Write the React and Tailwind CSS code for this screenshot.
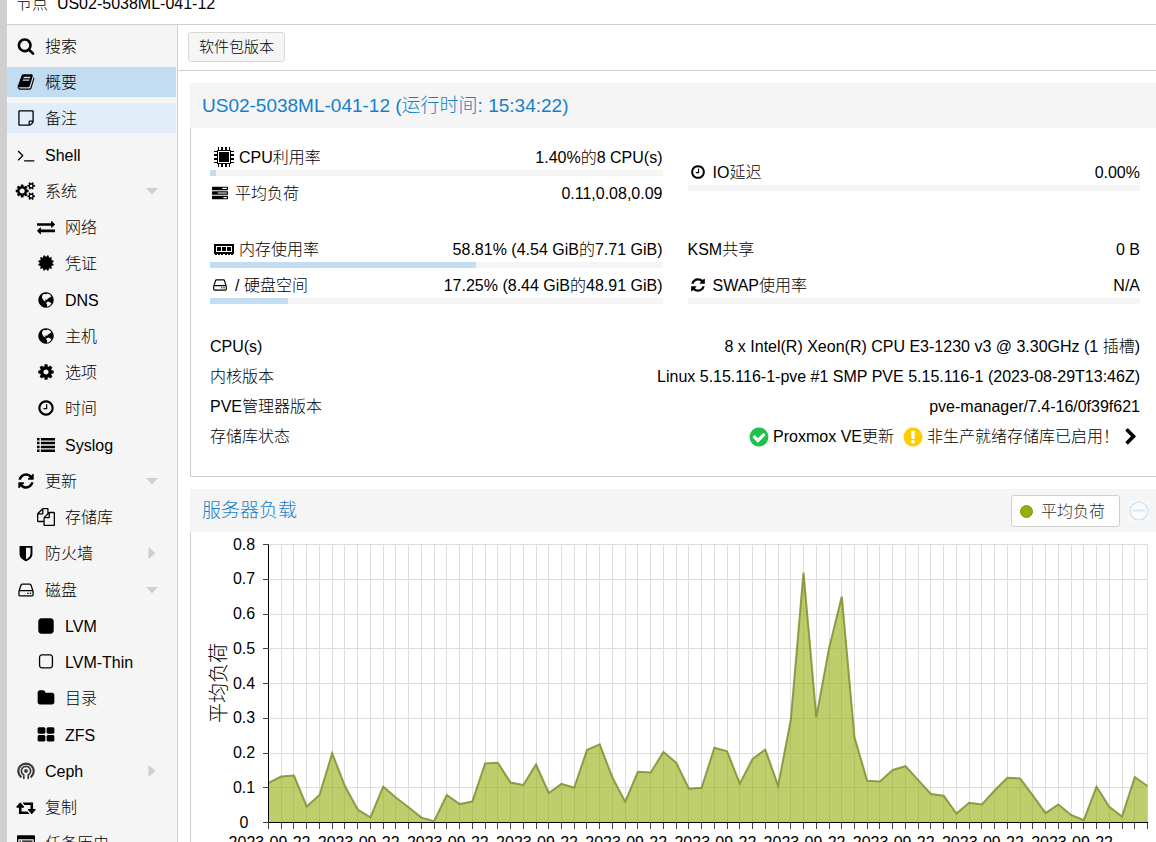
const paths = {
    search: "M1216 832q0-185-131.5-316.5t-316.5-131.5-316.5 131.5-131.5 316.5 131.5 316.5 316.5 131.5 316.5-131.5 131.5-316.5zm512 832q0 52-38 90t-90 38q-54 0-90-38l-343-342q-179 124-399 124-143 0-273.5-55.5t-225-150-150-225-55.5-273.5 55.5-273.5 150-225 225-150 273.5-55.5 273.5 55.5 225 150 150 225 55.5 273.5q0 220-124 399l343 343q37 37 37 90z",
    book: "M1703 478q40 57 18 129l-275 906q-19 64-76.5 107.5t-122.5 43.5h-923q-77 0-148.5-53.5t-99.5-131.5q-24-67-2-127 0-4 3-27t4-37q1-8-3-21.5t-3-19.5q2-11 8-21t16.5-23.5 16.5-23.5q23-38 45-91.5t30-91.5q3-10 .5-30t-.5-28q3-11 17-28t17-23q21-36 42-92t25-90q1-9-2.5-32t.5-28q4-13 22-30.5t22-22.5q19-26 42.5-84.5t27.5-96.5q1-8-3-25.5t-2-26.5q2-8 9-18t18-23 17-21q8-12 16.5-30.5t15-35 16-36 19.5-32 26.5-23.5 36-11.5 47.5 5.5l-1 3q38-9 51-9h761q74 0 114 56t18 130l-274 906q-36 119-71.5 153.5t-128.5 34.5h-869q-27 0-38 15-11 16-1 43 24 70 144 70h923q29 0 56-15.5t35-41.5l300-987q7-22 5-57 38 15 59 43zm-1064 2q-4 13 2 22.5t20 9.5h608q13 0 25.5-9.5t16.5-22.5l21-64q4-13-2-22.5t-20-9.5h-608q-13 0-25.5 9.5t-16.5 22.5zm-83 256q-4 13 2 22.5t20 9.5h608q13 0 25.5-9.5t16.5-22.5l21-64q4-13-2-22.5t-20-9.5h-608q-13 0-25.5 9.5t-16.5 22.5z",
    note: "M1528 1280h-248v248q29-10 41-22l185-185q12-12 22-41zm-280-128h288v-896h-1280v1280h896v-288q0-40 28-68t68-28zm416-928v1024q0 40-20 88t-48 76l-184 184q-28 28-76 48t-88 20h-1024q-40 0-68-28t-28-68v-1344q0-40 28-68t68-28h1344q40 0 68 28t28 68z",
    terminal: "M649 983l-466 466q-10 10-23 10t-23-10l-50-50q-10-10-10-23t10-23l393-393-393-393q-10-10-10-23t10-23l50-50q10-10 23-10t23 10l466 466q10 10 10 23t-10 23zm1079 457v64q0 14-9 23t-23 9h-960q-14 0-23-9t-9-23v-64q0-14 9-23t23-9h960q14 0 23 9t9 23z",
    cogs: "M832 896q0-106-75-181t-181-75-181 75-75 181 75 181 181 75 181-75 75-181zm768 512q0-52-38-90t-90-38-90 38-38 90q0 53 37.5 90.5t90.5 37.5 90.5-37.5 37.5-90.5zm0-1024q0-52-38-90t-90-38-90 38-38 90q0 53 37.5 90.5t90.5 37.5 90.5-37.5 37.5-90.5zm-384 421v185q0 10-7 19.5t-16 10.5l-155 24q-11 35-32 76 34 48 90 115 7 11 7 20 0 12-7 19-23 30-82.5 89.5t-78.5 59.5q-11 0-21-7l-115-90q-37 19-77 31-11 108-23 155-7 24-30 24h-186q-11 0-20-7.5t-10-17.5l-23-153q-34-10-75-31l-118 89q-7 7-20 7-11 0-21-8-144-133-144-160 0-9 7-19 10-14 41-53t47-61q-23-44-35-82l-152-24q-10-1-17-9.5t-7-19.5v-185q0-10 7-19.5t16-10.5l155-24q11-35 32-76-34-48-90-115-7-11-7-20 0-12 7-20 22-30 82-89t79-59q11 0 21 7l115 90q34-18 77-32 11-108 23-154 7-24 30-24h186q11 0 20 7.5t10 17.5l23 153q34 10 75 31l118-89q8-7 20-7 11 0 21 8 144 133 144 160 0 8-7 19-12 16-42 54t-45 60q23 48 34 82l152 23q10 2 17 10.5t7 19.5zm640 533v140q0 16-149 31-12 27-30 52 51 113 51 138 0 4-4 7-122 71-124 71-8 0-46-47t-52-68q-20 2-30 2t-30-2q-14 21-52 68t-46 47q-2 0-124-71-4-3-4-7 0-25 51-138-18-25-30-52-149-15-149-31v-140q0-16 149-31 13-29 30-52-51-113-51-138 0-4 4-7 4-2 35-20t59-34 30-16q8 0 46 46.5t52 67.5q20-2 30-2t30 2q51-71 92-112l6-2q4 0 124 70 4 3 4 7 0 25-51 138 17 23 30 52 149 15 149 31zm0-1024v140q0 16-149 31-12 27-30 52 51 113 51 138 0 4-4 7-122 71-124 71-8 0-46-47t-52-68q-20 2-30 2t-30-2q-14 21-52 68t-46 47q-2 0-124-71-4-3-4-7 0-25 51-138-18-25-30-52-149-15-149-31v-140q0-16 149-31 13-29 30-52-51-113-51-138 0-4 4-7 4-2 35-20t59-34 30-16q8 0 46 46.5t52 67.5q20-2 30-2t30 2q51-71 92-112l6-2q4 0 124 70 4 3 4 7 0 25-51 138 17 23 30 52 149 15 149 31z",
    exchange: "M1792 1184v192q0 13-9.5 22.5t-22.5 9.5h-1376v192q0 13-9.5 22.5t-22.5 9.5q-12 0-24-10l-319-320q-9-9-9-22 0-14 9-23l320-320q9-9 23-9 13 0 22.5 9.5t9.5 22.5v192h1376q13 0 22.5 9.5t9.5 22.5zm0-544q0 14-9 23l-320 320q-9 9-23 9-13 0-22.5-9.5t-9.5-22.5v-192h-1376q-13 0-22.5-9.5t-9.5-22.5v-192q0-13 9.5-22.5t22.5-9.5h1376v-192q0-14 9-23t23-9q12 0 24 10l319 319q9 9 9 23z",
    certificate: "M1504 896l138 135q30 28 20 70-12 41-52 51l-188 48 53 186q12 41-19 70-29 31-70 19l-186-53-48 188q-10 40-51 52-12 2-19 2-31 0-51-22l-135-138-135 138q-28 30-70 20-41-11-51-52l-48-188-186 53q-41 12-70-19-31-29-19-70l53-186-188-48q-40-10-52-51-10-42 20-70l138-135-138-135q-30-28-20-70 12-41 52-51l188-48-53-186q-12-41 19-70 29-31 70-19l186 53 48-188q10-41 51-51 41-12 70 19l135 139 135-139q29-30 70-19 41 10 51 51l48 188 186-53q41-12 70 19 31 29 19 70l-53 186 188 48q40 10 52 51 10 42-20 70z",
    globe: "M896 128q209 0 385.500 103t279.500 279.500 103 385.500-103 385.500-279.500 279.500-385.500 103-385.500-103-279.500-279.500-103-385.500 103-385.500 279.500-279.500 385.500-103zM610 330l-90 130-20 180 60 150 130 170 190 90 30-50-110-50-20-80 130-20 90 60 50-130 170-90 60-90 150-40-90-150-150-110-190-60-30 90-130-40-60 20zM960 1110l160-60 190 70 120 110-90 170-180 130-170 40 20-190-90-150z",
    gear: "M1152 896q0-106-75-181t-181-75-181 75-75 181 75 181 181 75 181-75 75-181zm512-109v222q0 12-8 23t-20 13l-185 28q-19 54-39 91 35 50 107 138 10 12 10 25t-9 23q-27 37-99 108t-94 71q-12 0-26-9l-138-108q-44 23-91 38-16 136-29 186-7 28-36 28h-222q-14 0-24.5-8.5t-11.5-21.5l-28-184q-49-16-90-37l-141 107q-10 9-25 9-14 0-25-11-126-114-165-168-7-10-7-23 0-12 8-23 15-21 51-66.5t54-70.5q-27-50-41-99l-183-27q-13-2-21-12.5t-8-23.5v-222q0-12 8-23t19-13l186-28q14-46 39-92-40-57-107-138-10-12-10-24 0-10 9-23 26-36 98.5-107.5t94.5-71.5q13 0 26 10l138 107q44-23 91-38 16-136 29-186 7-28 36-28h222q14 0 24.5 8.5t11.5 21.5l28 184q49 16 90 37l142-107q9-9 24-9 13 0 25 10 129 119 165 170 7 8 7 22 0 12-8 23-15 21-51 66.5t-54 70.5q26 50 41 98l183 28q13 2 21 12.5t8 23.5z",
    clock: "M1024 544v448q0 14-9 23t-23 9h-320q-14 0-23-9t-9-23v-64q0-14 9-23t23-9h224v-352q0-14 9-23t23-9h64q14 0 23 9t9 23zm416 352q0-148-73-273t-198-198-273-73-273 73-198 198-73 273 73 273 198 198 273 73 273-73 198-198 73-273zm224 0q0 209-103 385.5t-279.5 279.5-385.5 103-385.5-103-279.5-279.5-103-385.5 103-385.5 279.5-279.5 385.5-103 385.5 103 279.5 279.5 103 385.5z",
    list: "M0 192h256v256h-256zM384 192h1408v256h-1408zM0 576h256v256h-256zM384 576h1408v256h-1408zM0 960h256v256h-256zM384 960h1408v256h-1408zM0 1344h256v256h-256zM384 1344h1408v256h-1408z",
    refresh: "M1639 1056q0 5-1 7-64 268-268 434.5t-478 166.5q-146 0-282.5-55t-243.5-157l-129 129q-19 19-45 19t-45-19-19-45v-448q0-26 19-45t45-19h448q26 0 45 19t19 45-19 45l-137 137q71 66 161 102t187 36q134 0 250-65t186-179q11-17 53-117 8-23 30-23h192q13 0 22.5 9.5t9.5 22.5zm25-800v448q0 26-19 45t-45 19h-448q-26 0-45-19t-19-45 19-45l138-138q-148-137-349-137-134 0-250 65t-186 179q-11 17-53 117-8 23-30 23h-199q-13 0-22.5-9.5t-9.5-22.5v-7q65-268 270-434.5t480-166.5q146 0 284 55.5t245 156.5l130-129q19-19 45-19t45 19 19 45z",
    files: "M1696 384q40 0 68 28t28 68v1216q0 40-28 68t-68 28h-960q-40 0-68-28t-28-68v-288h-544q-40 0-68-28t-28-68v-672q0-40 20-88t48-76l408-408q28-28 76-48t88-20h416q40 0 68 28t28 68v328q68-40 128-40h416zm-544 213l-299 299h299v-299zm-640-384l-299 299h299v-299zm196 647l316-316v-416h-384v416q0 40-28 68t-68 28h-416v640h512v-256q0-40 20-88t48-76zm956 804v-1152h-384v416q0 40-28 68t-68 28h-416v640h896z",
    shield: "M1344 1024v-640h-448v1137q119-63 213-137 235-184 235-360zm192-768v768q0 86-33.5 170.5t-83 150-118 127.5-126.5 103-121 77.5-89.5 49.5-42.5 20q-12 6-26 6t-26-6q-16-7-42.5-20t-89.5-49.5-121-77.5-126.5-103-118-127.5-83-150-33.5-170.5v-768q0-26 19-45t45-19h1152q26 0 45 19t19 45z",
    hdd: "M1168 1216q0 33-23.5 56.5t-56.5 23.5-56.5-23.5-23.5-56.5 23.5-56.5 56.5-23.5 56.5 23.5 23.5 56.5zm256 0q0 33-23.5 56.5t-56.5 23.5-56.5-23.5-23.5-56.5 23.5-56.5 56.5-23.5 56.5 23.5 23.5 56.5zm112 160v-320q0-13-9.5-22.5t-22.5-9.5h-1216q-13 0-22.5 9.5t-9.5 22.5v320q0 13 9.5 22.5t22.5 9.5h1216q13 0 22.5-9.5t9.5-22.5zm-1230-480h1180l-157-482q-4-13-16-21.5t-26-8.5h-782q-14 0-26 8.5t-16 21.5zm1358 160v320q0 66-47 113t-113 47h-1216q-66 0-113-47t-47-113v-320q0-25 16-75l197-606q17-53 63-86t101-33h782q55 0 101 33t63 86l197 606q16 50 16 75z",
    square: "M1664 416v960q0 119-84.5 203.5t-203.5 84.5h-960q-119 0-203.5-84.5t-84.5-203.5v-960q0-119 84.5-203.5t203.5-84.5h960q119 0 203.5 84.5t84.5 203.5z",
    squareO: "M1312 256h-832q-66 0-113 47t-47 113v832q0 66 47 113t113 47h832q66 0 113-47t47-113v-832q0-66-47-113t-113-47zm288 160v832q0 119-84.5 203.5t-203.5 84.5h-832q-119 0-203.5-84.5t-84.5-203.5v-832q0-119 84.5-203.5t203.5-84.5h832q119 0 203.5 84.5t84.5 203.5z",
    folder: "M1728 608v704q0 92-66 158t-158 66h-1216q-92 0-158-66t-66-158v-960q0-92 66-158t158-66h320q92 0 158 66t66 158v32h672q92 0 158 66t66 158z",
    thLarge: "M832 1024v384q0 52-38 90t-90 38h-512q-52 0-90-38t-38-90v-384q0-52 38-90t90-38h512q52 0 90 38t38 90zm0-768v384q0 52-38 90t-90 38h-512q-52 0-90-38t-38-90v-384q0-52 38-90t90-38h512q52 0 90 38t38 90zm896 768v384q0 52-38 90t-90 38h-512q-52 0-90-38t-38-90v-384q0-52 38-90t90-38h512q52 0 90 38t38 90zm0-768v384q0 52-38 90t-90 38h-512q-52 0-90-38t-38-90v-384q0-52 38-90t90-38h512q52 0 90 38t38 90z",
    retweet: "M1280 1568q0 13-9.5 22.5t-22.5 9.5h-960q-8 0-13.5-2t-9-7-5.5-8-3-11.5-1-11.5v-600h-192q-26 0-45-19t-19-45q0-24 15-41l320-384q19-22 49-22t49 22l320 384q15 17 15 41 0 26-19 45t-45 19h-192v384h576q16 0 25 11l160 192q7 10 7 21zm640-416q0 24-15 41l-320 384q-20 23-49 23t-49-23l-320-384q-15-17-15-41 0-26 19-45t45-19h192v-384h-576q-16 0-25-12l-160-192q-7-9-7-20 0-13 9.5-22.5t22.5-9.5h960q8 0 13.5 2t9 7 5.5 8 3 11.5 1 11.5v600h192q26 0 45 19t19 45z",
    listAlt: "M96 128h1600q96 0 96 96v1344q0 96-96 96h-1600q-96 0-96-96v-1344q0-96 96-96zM128 512v1024h1536v-1024zM256 640h128v128h-128zM512 640h1024v128h-1024zM256 896h128v128h-128zM512 896h1024v128h-1024zM256 1152h128v128h-128zM512 1152h1024v128h-1024z",
    tasks: "M64 192h1664q64 0 64 64v256q0 64-64 64h-1664q-64 0-64-64v-256q0-64 64-64zM1152 320v128h512v-128zM64 704h1664q64 0 64 64v256q0 64-64 64h-1664q-64 0-64-64v-256q0-64 64-64zM640 832v128h1024v-128zM64 1216h1664q64 0 64 64v256q0 64-64 64h-1664q-64 0-64-64v-256q0-64 64-64zM1280 1344v128h384v-128z",
    check: "M1412 734q0-28-18-46l-91-90q-19-19-45-19t-45 19l-408 407-226-226q-19-19-45-19t-45 19l-91 90q-18 18-18 46 0 27 18 45l362 362q19 19 45 19 27 0 46-19l543-543q18-18 18-45zm252 162q0 209-103 385.5t-279.5 279.5-385.5 103-385.5-103-279.5-279.5-103-385.5 103-385.5 279.5-279.5 385.5-103 385.5 103 279.5 279.5 103 385.5z",
    warning: "M896 128q209 0 385.5 103t279.5 279.5 103 385.5-103 385.5-279.5 279.5-385.5 103-385.5-103-279.5-279.5-103-385.5 103-385.5 279.5-279.5 385.5-103zm128 1247v-190q0-14-9-23.5t-22-9.5h-192q-13 0-23 10t-10 23v190q0 13 10 23t23 10h192q13 0 22-9.5t9-23.5zm-2-344l18-621q0-12-10-18-10-8-24-8h-220q-14 0-24 8-10 6-10 18l17 621q0 10 10 17.5t24 7.5h185q14 0 23.5-7.5t10.5-17.5z",
    chevron: "M1363 877l-742 742q-19 19-45 19t-45-19l-166-166q-19-19-19-45t19-45l531-531-531-531q-19-19-19-45t19-45l166-166q19-19 45-19t45 19l742 742q19 19 19 45t-19 45z",
};

// cogs and retweet are drawn wider than the rest of the set
const wide = ["cogs", "retweet"];

const Icon = ({ name, className }) => {
    if (name === "ceph") return <CephIcon />;
    return (
        <svg
            viewBox={wide.includes(name) ? "0 0 1920 1792" : "0 0 1792 1792"}
            className={`shrink-0 overflow-visible ${className}`}
            fill="currentColor"
            fillRule="evenodd"
            aria-hidden="true"
        >
            <path d={paths[name]} />
        </svg>
    );
};

const CephIcon = () => (
    <svg viewBox="0 0 18 18" className="h-[18px] w-[18px] shrink-0" fill="none" stroke="#3a3a3a" strokeWidth="2.2" aria-hidden="true">
        <path d="M4.4 15.4A7.7 7.7 0 1 1 13.600 15.4" />
        <path d="M6.800 17V13A4.600 4.600 0 1 1 11.200 13V17" strokeWidth="1.700" />
        <circle cx="9" cy="9" r="1.900" fill="#3a3a3a" stroke="none" />
    </svg>
);

const CpuIcon = () => (
    <svg viewBox="0 0 20 20" className="ml-1 mr-[5px] h-5 w-5 shrink-0" shapeRendering="crispEdges" aria-hidden="true">
        <path
            d="M4 0h1v3h2V0h2v3h2V0h2v3h2V0h1v3h1v1h3v1h-3v2h3v2h-3v2h3v2h-3v2h3v1h-3v1h-1v3h-1v-3h-2v3h-2v-3H9v3H7v-3H5v3H4v-3H3v-1H0v-1h3v-2H0v-2h3V9H0V7h3V5H0V4h3V3h1zM4 4v12h12V4zM5 5h10v10H5z"
            fillRule="evenodd"
        />
    </svg>
);

const MemoryIcon = () => (
    <svg viewBox="0 0 20 11" className="ml-1 mr-[5px] h-[11px] w-5 shrink-0" shapeRendering="crispEdges" aria-hidden="true">
        <path d="M0 0h20v10h-1v1h-2v-1h-1v1h-2v-1h-1v1h-2v-1H9v1H7v-1H6v1H4v-1H3v1H1v-1H0zM2 2v6h16V2zM3 3h4v4H3zM8 3h4v4H8zM13 3h4v4h-4z" fillRule="evenodd" />
    </svg>
);

const menu = [
    { text: "搜索", icon: "search" },
    { text: "概要", icon: "book", state: "active" },
    { text: "备注", icon: "note", state: "hover" },
    { text: "Shell", icon: "terminal" },
    { text: "系统", icon: "cogs", arrow: "down" },
    { text: "网络", icon: "exchange", sub: true },
    { text: "凭证", icon: "certificate", sub: true },
    { text: "DNS", icon: "globe", sub: true },
    { text: "主机", icon: "globe", sub: true },
    { text: "选项", icon: "gear", sub: true },
    { text: "时间", icon: "clock", sub: true },
    { text: "Syslog", icon: "list", sub: true },
    { text: "更新", icon: "refresh", arrow: "down" },
    { text: "存储库", icon: "files", sub: true },
    { text: "防火墙", icon: "shield", arrow: "right" },
    { text: "磁盘", icon: "hdd", arrow: "down" },
    { text: "LVM", icon: "square", sub: true },
    { text: "LVM-Thin", icon: "squareO", sub: true },
    { text: "目录", icon: "folder", sub: true },
    { text: "ZFS", icon: "thLarge", sub: true },
    { text: "Ceph", icon: "ceph", arrow: "right" },
    { text: "复制", icon: "retweet" },
    { text: "任务历史", icon: "listAlt" },
];

const itemBg = {
    active: "bg-[#c2ddf2]",
    hover: "bg-[#e1eef9]",
};

const Sidebar = () => (
    <nav className="w-[171px] shrink-0 border-r border-[#cfcfcf] bg-[#f5f5f5] pr-px">
        <ul>
            {menu.map((item) => (
                <li key={item.text} className="pt-[6px] nth-[4n]:pt-[7px]">
                    <a
                        href="#"
                        className={`flex h-[30px] items-center gap-[9px] pr-[17px] ${item.sub ? "pl-[29px]" : "pl-[9px]"} ${itemBg[item.state] || ""}`}
                    >
                        <span className="flex w-5 shrink-0 justify-center">
                            <Icon name={item.icon} className={wide.includes(item.icon) ? "h-[18px] w-5" : "h-[18px] w-[18px]"} />
                        </span>
                        <span className="grow whitespace-nowrap pt-[2px]">{item.text}</span>
                        {item.arrow && (
                            <svg viewBox="0 0 14 14" className="h-[14px] w-[14px] shrink-0" fill="#cfcfcf" aria-hidden="true">
                                <path d={item.arrow === "down" ? "M1 4h12L7 10.500z" : "M3.500 1v12L10.500 7z"} />
                            </svg>
                        )}
                    </a>
                </li>
            ))}
        </ul>
    </nav>
);

const Stat = ({ icon, label, value, percent }) => (
    <div className="min-h-[31px]">
        <div className="flex h-6 items-center justify-between">
            <span className="flex items-center whitespace-nowrap">
                {icon}
                <span className="pt-[2px]">{label}</span>
            </span>
            <span className="whitespace-nowrap pt-[2px]">{value}</span>
        </div>
        {percent !== undefined && (
            <div className="mt-px h-[6px] bg-[#f5f5f5]">
                <div className="h-full bg-[#c2ddf2]" style={{ width: `${percent}%` }}></div>
            </div>
        )}
    </div>
);

const SmallIcon = ({ name }) => <Icon name={name} className="ml-[2px] mr-[7px] h-4 w-4" />;

const InfoRow = ({ label, children }) => (
    <div className="flex h-[30px] items-center justify-between pt-[2px]">
        <dt>{label}</dt>
        <dd className="flex items-center whitespace-nowrap">{children}</dd>
    </div>
);

const load = [
    0.114, 0.132, 0.135, 0.046, 0.079, 0.199, 0.105, 0.037, 0.015, 0.103, 0.072, 0.044, 0.014, 0.004,
    0.079, 0.053, 0.06, 0.17, 0.172, 0.115, 0.108, 0.167, 0.085, 0.111, 0.1, 0.209, 0.225, 0.129,
    0.06, 0.146, 0.144, 0.203, 0.172, 0.097, 0.1, 0.215, 0.205, 0.112, 0.183, 0.21, 0.106, 0.295,
    0.719, 0.303, 0.501, 0.65, 0.245, 0.12, 0.118, 0.151, 0.162, 0.122, 0.082, 0.077, 0.026, 0.057,
    0.052, 0.092, 0.129, 0.127, 0.078, 0.027, 0.052, 0.022, 0.007, 0.103, 0.045, 0.017, 0.131, 0.105,
];

const LEFT = 77.5;
const RIGHT = 956.5;
const TOP = 12.5;
const BOTTOM = 290.5;

const xAt = (i) => LEFT + (i * (RIGHT - LEFT)) / (load.length - 1);
const yAt = (v) => BOTTOM - (v * (BOTTOM - TOP)) / 0.8;

const LoadChart = () => {
    const line = load.map((v, i) => `${xAt(i).toFixed(1)},${yAt(v).toFixed(1)}`).join(" ");
    const yTicks = [0, 0.1, 0.2, 0.3, 0.4, 0.5, 0.6, 0.7, 0.8];

    return (
        <svg viewBox="0 0 965 330" className="block w-full" role="img" aria-label="平均负荷">
            <g stroke="#dedede" shapeRendering="crispEdges">
                {yTicks.map((t) => (
                    <line key={t} x1={LEFT} x2={RIGHT} y1={yAt(t)} y2={yAt(t)} />
                ))}
                {load.map((_, i) => (
                    <line key={i} x1={xAt(i)} x2={xAt(i)} y1={TOP} y2={BOTTOM} />
                ))}
            </g>

            <polygon points={`${LEFT},${BOTTOM} ${line} ${RIGHT},${BOTTOM}`} fill="#94ae0a" fillOpacity="0.6" />
            <polyline points={line} fill="none" stroke="#7d8f30" strokeOpacity="0.85" strokeWidth="2" />

            <g stroke="#000" shapeRendering="crispEdges">
                <line x1={LEFT} x2={LEFT} y1={TOP} y2={BOTTOM} />
                <line x1={LEFT} x2={RIGHT} y1={BOTTOM} y2={BOTTOM} />
            </g>
            <g stroke="#444" shapeRendering="crispEdges">
                {yTicks.map((t) => (
                    <line key={t} x1={LEFT - 6} x2={LEFT} y1={yAt(t)} y2={yAt(t)} />
                ))}
                {load.map((_, i) => (
                    <line key={i} x1={xAt(i)} x2={xAt(i)} y1={BOTTOM} y2={BOTTOM + 6} />
                ))}
            </g>

            <g fontSize="16" textAnchor="middle">
                {yTicks.map((t) => (
                    <text key={t} x="53" y={yAt(t) + 5}>{t}</text>
                ))}
                {load.map((_, i) => i % 7 === 0 && i < 64 && (
                    <text key={i} x={xAt(i) + 1} y="316">2023-09-22</text>
                ))}
            </g>
            <text fontSize="20" textAnchor="middle" transform="translate(35 151) rotate(-90)">平均负荷</text>
        </svg>
    );
};

const App = () => {
    return (
        <div className="flex h-screen overflow-hidden border-l-[7px] border-[#cfcfcf] bg-white font-['Liberation_Sans','Noto_Sans_CJK_SC',sans-serif] text-base font-light text-black">
            <div className="flex min-w-0 grow flex-col">
                <header className="flex h-[25px] shrink-0 items-end border-b border-[#cfcfcf] pb-2 pl-[9px]">
                    <h1 className="whitespace-pre">节点  US02-5038ML-041-12</h1>
                </header>

                <div className="flex min-h-0 grow">
                    <Sidebar />

                    <main className="min-w-0 grow">
                        <div className="flex h-[46px] items-center border-b border-[#cfcfcf] pb-px pl-[10px]">
                            <button type="button" className="h-[30px] rounded-[3px] border border-[#d8d8d8] bg-[#f5f5f5] px-[10px] text-[15px]">
                                软件包版本
                            </button>
                        </div>

                        {/* Node status */}
                        <section className="ml-3 mt-3">
                            <h2 className="flex h-[45px] items-center bg-[#f5f5f5] pl-3 pt-[2px] text-[19px] text-[#157fcc]">
                                US02-5038ML-041-12 (运行时间: 15:34:22)
                            </h2>
                            <div className="border-b border-l border-[#cfcfcf] pb-[25px] pl-[19px] pr-4 pt-[17px]">
                                <div className="grid grid-cols-2 items-start gap-x-[25px]">
                                    <div className="flex flex-col gap-[5px]">
                                        <Stat icon={<CpuIcon />} label="CPU利用率" value="1.40%的8 CPU(s)" percent={1.4} />
                                        <Stat icon={<SmallIcon name="tasks" />} label="平均负荷" value="0.11,0.08,0.09" />
                                    </div>
                                    <div className="pt-[15px]">
                                        <Stat icon={<SmallIcon name="clock" />} label="IO延迟" value="0.00%" percent={0} />
                                    </div>
                                </div>
                                <div className="mt-[25px] grid grid-cols-2 gap-x-[25px] gap-y-[5px]">
                                    <Stat icon={<MemoryIcon />} label="内存使用率" value="58.81% (4.54 GiB的7.71 GiB)" percent={58.81} />
                                    <Stat label="KSM共享" value="0 B" />
                                    <Stat icon={<SmallIcon name="hdd" />} label="/ 硬盘空间" value="17.25% (8.44 GiB的48.91 GiB)" percent={17.25} />
                                    <Stat icon={<SmallIcon name="refresh" />} label="SWAP使用率" value="N/A" percent={0} />
                                </div>
                                <dl className="mt-[27px]">
                                    <InfoRow label="CPU(s)">8 x Intel(R) Xeon(R) CPU E3-1230 v3 @ 3.30GHz (1 插槽)</InfoRow>
                                    <InfoRow label="内核版本">Linux 5.15.116-1-pve #1 SMP PVE 5.15.116-1 (2023-08-29T13:46Z)</InfoRow>
                                    <InfoRow label="PVE管理器版本">pve-manager/7.4-16/0f39f621</InfoRow>
                                    <InfoRow label="存储库状态">
                                        <Icon name="check" className="mr-[3px] h-[22px] w-[22px] text-[#21bf4b]" />
                                        Proxmox VE更新
                                        <Icon name="warning" className="ml-2 mr-[3px] h-[22px] w-[22px] text-[#ffcc00]" />
                                        非生产就绪存储库已启用！
                                        <Icon name="chevron" className="ml-[3px] h-[18px] w-[18px]" />
                                    </InfoRow>
                                </dl>
                            </div>
                        </section>

                        {/* Server load */}
                        <section className="ml-3 mt-3">
                            <div className="flex h-[43px] items-center bg-[#f5f5f5] pl-3 pr-[7px]">
                                <h2 className="grow pt-[2px] text-[19px] text-[#157fcc]">服务器负载</h2>
                                <button type="button" className="flex h-8 items-center gap-2 rounded-[3px] border border-[#cfcfcf] bg-white pl-2 pr-[14px] pt-[2px] text-[#333]">
                                    <span className="h-[13px] w-[13px] rounded-full border border-[#83990d] bg-[#94ae0a]"></span>
                                    平均负荷
                                </button>
                                <button type="button" aria-label="缩小" className="ml-[9px] bg-[#f9fbfd]">
                                    <svg viewBox="0 0 20 20" className="h-5 w-5" fill="none" stroke="#d3e5f4" strokeWidth="1.500">
                                        <circle cx="10" cy="10" r="9" />
                                        <path d="M4 9.500h12" />
                                    </svg>
                                </button>
                            </div>
                            <div className="border-l border-[#cfcfcf]">
                                <LoadChart />
                            </div>
                        </section>
                    </main>
                </div>
            </div>
        </div>
    );
};

export default App;
